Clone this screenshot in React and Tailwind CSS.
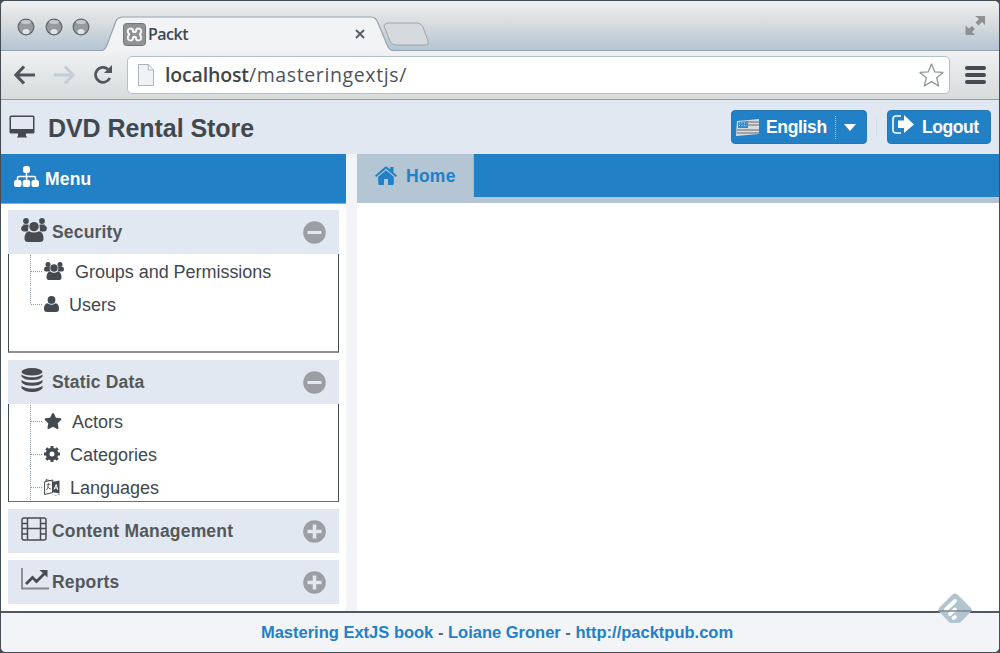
import React from "react";
import { FaStar } from "react-icons/fa";

const UsersIcon = ({ className }) => (
  <svg className={className} viewBox="0 0 20 18" fill="currentColor">
    <circle cx="4" cy="2.600" r="2.500" />
    <circle cx="16" cy="2.600" r="2.500" />
    <path d="M1.500 4.800H6Q5 7.500 6.500 9.400H1.800Q0 9.400 0 7.800Q0 5 1.500 4.800ZM18.500 4.800H14Q15 7.500 13.500 9.400H18.200Q20 9.400 20 7.800Q20 5 18.500 4.800Z" />
    <circle cx="10" cy="6" r="3.700" />
    <path d="M6.200 9.500Q8 10.700 10 10.700T13.800 9.500Q17.500 10 17.500 15.200Q17.500 18 14.700 18H5.300Q2.500 18 2.500 15.200Q2.500 10 6.200 9.500Z" />
  </svg>
);

const UserIcon = ({ className }) => (
  <svg className={className} viewBox="0 0 15 16" fill="currentColor">
    <circle cx="7.500" cy="3.900" r="3.900" />
    <path d="M3.400 7.300Q5 8.700 7.500 8.700Q10 8.700 11.600 7.300Q15 8 15 12.800Q15 16 12 16H3Q0 16 0 12.800Q0 8 3.400 7.300Z" />
  </svg>
);

const CrowdIcon = ({ className }) => (
  <svg className={className} viewBox="0 0 26 24" fill="currentColor">
    <circle cx="5" cy="3" r="2.900" />
    <circle cx="21" cy="3" r="2.900" />
    <circle cx="3.200" cy="10.500" r="3" />
    <circle cx="22.800" cy="10.500" r="3" />
    <path d="M2 6.500H7.500L7 13.300L4 13.500ZM24 6.500H18.500L19 13.300L22 13.500Z" />
    <circle cx="13" cy="8.600" r="4.700" />
    <path d="M8 13.200Q10 14.600 13 14.600Q16 14.600 18 13.200Q22.500 14 22.500 20.500Q22.500 24 19 24H7Q3.500 24 3.500 20.500Q3.500 14 8 13.200Z" />
  </svg>
);

const DatabaseIcon = ({ className }) => (
  <svg className={className} viewBox="0 0 22 24" fill="currentColor">
    <ellipse cx="11" cy="3.800" rx="10.500" ry="3.700" />
    <path d="M.5 6.400Q4 9.200 11 9.200T21.500 6.400V8.500Q19 12 11 12T.5 8.500ZM.5 12Q4 14.800 11 14.800T21.500 12V14.300Q19 17.800 11 17.800T.5 14.300ZM.5 17.700Q4 20.500 11 20.500T21.500 17.700V20.300Q19 24 11 24T.5 20.300Z" />
  </svg>
);

const GearIcon = ({ className }) => (
  <svg className={className} viewBox="0 0 16 16" fill="none" stroke="currentColor">
    <circle cx="8" cy="8" r="4.400" strokeWidth="3.800" />
    <path d="M8 0V3M8 13V16M0 8H3M13 8H16M2.300 2.300L4.500 4.500M11.500 11.500L13.700 13.700M2.300 13.700L4.500 11.500M11.500 4.500L13.700 2.300" strokeWidth="3" />
  </svg>
);

const HomeIcon = ({ className }) => (
  <svg className={className} viewBox="0 0 22 19" fill="currentColor">
    <path d="M0 9.500L9.800 1Q11 0 12.200 1L15.200 3.600V1H18.500V6.500L22 9.500L20.800 10.900L11 2.800L1.200 10.900Z" />
    <path d="M11 4.200L18.800 10.800V17.500Q18.800 19 17.500 19H13V13H9V19H4.500Q3.200 19 3.200 17.500V10.800Z" />
  </svg>
);

const LanguageIcon = ({ className }) => (
  <svg className={className} viewBox="0 0 16 17">
    <path d="M.6 2.800L8.800 1V13.500L.6 15.500ZM2 2V.7L8 2" fill="none" stroke="currentColor" strokeWidth="1" />
    <path d="M2.500 6L6.500 5M4.300 4V6Q4.300 9.500 2.400 11M3.500 7.500Q5 10 7 10" fill="none" stroke="currentColor" strokeWidth=".8" />
    <path d="M8 3L15.500 1.500V14.500L8 13ZM8 15.500L12 16.500L15.500 15V16H9Z" fill="currentColor" />
    <path d="M10 10.500L12.200 5.500L13.800 10.800M10.800 9H13.300" fill="none" stroke="white" strokeWidth="1" />
  </svg>
);

const FilmIcon = ({ className }) => (
  <svg className={className} viewBox="0 0 26 24" fill="none" stroke="currentColor" strokeWidth="1.500">
    <rect x="1" y="1" width="24" height="22" rx="2" />
    <path d="M6.500 1V23M19.500 1V23M6.500 11.500H19.500M1 6.500H6.500M1 11.500H6.500M1 17H6.500M19.500 6.500H25M19.500 11.500H25M19.500 17H25" />
  </svg>
);

const ChartIcon = ({ className }) => (
  <svg className={className} viewBox="0 0 28 22" fill="none" stroke="currentColor">
    <path d="M1 0V20.500H28" strokeWidth="1.800" stroke="#85878a" />
    <path d="M5 16L11.500 9.500L15.500 13.500L24 5" strokeWidth="2.800" />
    <path d="M18.500 2H26.500V9.500Z" fill="currentColor" stroke="none" />
  </svg>
);

const Toggle = ({ open }) => (
  <svg className="mr-[13px] h-[23px] w-[23px] shrink-0" viewBox="0 0 23 23">
    <circle cx="11.500" cy="11.500" r="11.300" fill="#9b9fa3" />
    {open ? (
      <path d="M4.500 11.500H18.500" stroke="#e1e8f1" strokeWidth="3" />
    ) : (
      <path d="M4.500 11.500H18.500M11.500 4.500V18.500" stroke="#e1e8f1" strokeWidth="3.600" />
    )}
  </svg>
);

const SectionHeader = ({ icon, title, open }) => (
  <div className="flex h-11 w-[331px] shrink-0 items-center bg-[#e1e8f1]">
    <div className="ml-[13px] flex h-full w-[31px] items-start pt-[8px] text-[#474c50]">{icon}</div>
    <span className="flex-1 text-[17.500px] leading-5 font-bold tracking-[0.180px] whitespace-nowrap text-[#54585b]">{title}</span>
    <Toggle open={open} />
  </div>
);

const TreeRow = ({ icon, label, last, gap }) => (
  <div className="flex h-[33.200px] items-center">
    <svg className="ml-[20px] h-full w-[15px] shrink-0" viewBox="0 0 15 33" fill="none" stroke="#8194a4" strokeDasharray="1 1">
      <path d={last ? "M1.500 -1V17" : "M1.500 -1V33"} />
      <path d="M2 17.500H14" />
    </svg>
    <div className="flex items-center pt-px text-[#434a50]">{icon}</div>
    <span className={"pt-[2px] text-[18px] leading-5 whitespace-nowrap text-[#42484d] " + gap}>{label}</span>
  </div>
);

function Chrome() {
  return (
    <header className="h-[99px] border-b border-[#999] bg-[#dfe2e3]">
      <div className="relative flex h-[50px] items-start bg-linear-to-b from-[#eff0f2] via-[#d8dcde] via-45% to-[#b2c4d3]">
        <svg className="absolute top-[14px] left-0 h-9 w-[998px]" viewBox="0 0 998 36">
          <path d="M101 36Q104 35 106 30L115 6Q117 2 122 2H370Q375 2 377 8L387 32Q389 36 393 36Z" fill="#f1f3f5" />
          <path d="M0 35.500H101Q104 35 106 30L115 6Q117 2 122 2H370Q375 2 377 8L387 32Q389 35.500 393 35.500H998" fill="none" stroke="#96a3ad" strokeWidth="1.200" />
          <path d="M383 11Q384 8 387 8H416Q420 8 422 12L427 26Q428 30 424 30H395Q391 30 389 26Z" fill="#d4dadd" stroke="#a3a6a8" />
        </svg>
        <div className="mt-[17px] ml-4 flex gap-[9.500px]">
          {[0, 1, 2].map((n) => (
            <svg key={n} className="h-[18px] w-[18px]" viewBox="0 0 18 18">
              <circle cx="9" cy="9" r="7.800" fill="#999a9b" stroke="#666a6e" strokeWidth="1.300" />
              <ellipse cx="9" cy="4" rx="5" ry="2" fill="#c5c8ca" />
              <ellipse cx="9" cy="13.500" rx="3.500" ry="2.600" fill="#e1e6e9" />
            </svg>
          ))}
        </div>
        <svg className="relative mt-[22px] ml-[33px] h-[23px] w-[23px]" viewBox="0 0 23 23">
          <rect x=".5" y=".5" width="22" height="22" rx="3" fill="#919293" stroke="#737678" />
          <path d="M8 5.500Q10.500 6 10 8.500Q11.500 10 13 8.500Q12.500 6 15 5.500Q19 5.500 18 9.500Q16 11.500 18 13.500Q19 17.500 15 17.500Q12.500 17 13 14.500Q11.500 13 10 14.500Q10.500 17 8 17.500Q4 17.500 5 13.500Q7 11.500 5 9.500Q4 5.500 8 5.500Z" fill="none" stroke="#f5f6f7" strokeWidth="2" />
        </svg>
        <span className="relative mt-[22px] ml-[2px] w-[207px] font-['Open_Sans',sans-serif] text-[16px] leading-[22px] font-semibold tracking-[-0.500px] text-[#42484e]">Packt</span>
        <svg className="relative mt-[28px] h-[10px] w-[10px]" viewBox="0 0 10 10">
          <path d="M1 1L9 9M9 1L1 9" stroke="#555b60" strokeWidth="1.800" />
        </svg>
        <svg className="mt-[14px] mr-[13px] ml-auto h-[21px] w-[21px] text-[#8f9191]" viewBox="0 0 21 21" fill="currentColor">
          <path d="M10 1H20V10L17 7L13.500 10.500L10.500 7.500L14 4ZM.5 10.500L4 13.500L7 11L10 14L7 17L10 20H.5Z" />
        </svg>
      </div>
      <div className="flex h-12 items-center bg-linear-to-b from-[#eff1f2] to-[#d8dbdc]">
        <svg className="ml-[13px] h-[20px] w-[22px]" viewBox="0 0 22 20">
          <path d="M10 1.500L2 10L10 18.500M2 10H21" fill="none" stroke="#50565b" strokeWidth="3.200" />
        </svg>
        <svg className="ml-[17px] h-[20px] w-[22px]" viewBox="0 0 22 20">
          <path d="M12 1.500L20 10L12 18.500M20 10H1" fill="none" stroke="#c2cdd5" strokeWidth="3" />
        </svg>
        <svg className="ml-[18px] h-[20px] w-[20px]" viewBox="0 0 20 20">
          <path d="M15 4.200A7.500 7.500 0 1 0 16.800 13" fill="none" stroke="#50565b" strokeWidth="2.800" />
          <path d="M19 0V8H11Z" fill="#50565b" />
        </svg>
        <div className="ml-[14px] flex h-[38px] w-[823px] items-center rounded-[5px] border border-[#b3c1cd] bg-white">
          <svg className="ml-[10px] h-[22px] w-[16px]" viewBox="0 0 17 22" preserveAspectRatio="none">
            <path d="M.5 .5H11L16.500 6V21.500H.5ZM11 .5V6H16.500" fill="#f0f3f6" stroke="#a7b2bb" />
          </svg>
          <span className="ml-[11px] flex-1 font-['Open_Sans',sans-serif] text-[19.500px] leading-6 text-[#4c545a]">
            <span className="font-semibold tracking-[-0.150px] text-[#3f464b]">localhost</span>
            <span className="tracking-[0.620px]">/masteringextjs/</span>
          </span>
          <svg className="mr-[5px] h-[25px] w-[25px]" viewBox="0 0 25 25">
            <path d="M12.500 1L15.700 8.800L24 9.400L17.700 14.800L19.700 23L12.500 18.600L5.300 23L7.300 14.800L1 9.400L9.300 8.800Z" fill="none" stroke="#8b969e" strokeWidth="1.300" strokeLinejoin="round" />
          </svg>
        </div>
        <div className="ml-[15px] flex flex-col gap-[3px]">
          <div className="h-1 w-[21px] rounded-sm bg-[#454b51]" />
          <div className="h-1 w-[21px] rounded-sm bg-[#454b51]" />
          <div className="h-1 w-[21px] rounded-sm bg-[#454b51]" />
        </div>
      </div>
    </header>
  );
}

function TopBar() {
  return (
    <div className="flex h-[54px] shrink-0 items-start bg-[#e1e8f2]">
      <svg className="mt-[15px] ml-2 h-[23px] w-[26px]" viewBox="0 0 26 23">
        <path d="M2 .5H24Q25.500 .5 25.500 2V17Q25.500 18.500 24 18.500H17V21.500H18V22.500H8V21.500H9V18.500H2Q.5 18.500 .5 17V2Q.5 .5 2 .5ZM2 2V14H24V2Z" fill="#43494e" fillRule="evenodd" />
      </svg>
      <h1 className="mt-[13px] ml-[13px] text-[25px] leading-[30px] font-bold tracking-[-0.060px] whitespace-nowrap text-[#42484d]">DVD Rental Store</h1>
      <button className="mt-[10px] ml-auto flex h-[34px] w-[136px] items-center rounded-[4px] border border-[#2877b0] bg-[#2180c6] text-white">
        <svg className="ml-[4px] h-[17px] w-[24px]" viewBox="0 0 24 17">
          <path d="M1 2L13 1L23 0V15L12 16L0 17Z" fill="#d9dcde" />
          <path d="M12 3H23M12 6H23M1 11H23M1 14H23" stroke="#8d9092" strokeWidth="1.500" />
          <path d="M2 3L12 2V9H2Z" fill="#3b89c4" />
          <path d="M3 4H11M3 6.500H11" stroke="#d8e5ee" strokeDasharray="1 1.500" />
        </svg>
        <span className="ml-[6px] text-[17.500px] leading-5 font-bold tracking-[-0.350px]">English</span>
        <span className="ml-[8px] h-[23px] border-l border-dotted border-[#b3cddf]" />
        <svg className="ml-[8px] h-[9px] w-[12px]" viewBox="0 0 12 9"><path d="M0 1H12L6 8Z" fill="white" /></svg>
      </button>
      <span className="mt-[18px] ml-[9px] h-[18px] border-l border-[#d5dfe9]" />
      <button className="mt-[10px] mr-2 ml-[10px] flex h-[34px] w-[104px] items-center rounded-[4px] border border-[#2877b0] bg-[#2180c6] text-white">
        <svg className="mb-[6px] ml-[4px] h-[19px] w-[22px]" viewBox="0 0 22 19">
          <path d="M9 1H4Q1 1 1 4V15Q1 18 4 18H9" fill="none" stroke="white" strokeWidth="1.600" />
          <path d="M6 5.500H12V0L22 9.500L12 18V13H6Z" fill="white" />
        </svg>
        <span className="ml-[8px] text-[17.500px] leading-5 font-bold tracking-[-0.450px]">Logout</span>
      </button>
    </div>
  );
}

function Sidebar() {
  return (
    <nav className="flex w-[345px] shrink-0 flex-col overflow-hidden bg-white">
      <div className="mb-[6px] flex h-[50px] shrink-0 items-center border-b border-[#9aabb8] bg-[#2180c6] text-white">
        <svg className="mb-[4px] ml-[13px] h-[21px] w-[25px]" viewBox="0 0 25 21" fill="currentColor">
          <rect x="9" y="0" width="7" height="7" rx="2.500" />
          <rect x="0" y="14" width="7.500" height="7" rx="2" />
          <rect x="8.700" y="14" width="7.500" height="7" rx="2" />
          <rect x="17.500" y="14" width="7.500" height="7" rx="2" />
          <path d="M12.500 6V15M3.500 15V12Q3.500 10.500 5 10.500H20Q21.500 10.500 21.500 12V15" fill="none" stroke="currentColor" strokeWidth="1.600" />
        </svg>
        <span className="ml-[6px] text-[17.500px] leading-5 font-bold tracking-[0.200px]">Menu</span>
      </div>
      <div className="flex flex-col pl-[7px]">
        <SectionHeader title="Security" open icon={<CrowdIcon className="h-6 w-[26px]" />} />
        <div className="mb-[7px] h-[99px] w-[331px] overflow-hidden border-x border-b-2 border-x-[#434b52] border-b-[#8f9194]">
          <TreeRow icon={<UsersIcon className="h-[18px] w-5" />} label="Groups and Permissions" gap="ml-[11px] tracking-[-0.040px]" />
          <TreeRow last icon={<UserIcon className="h-4 w-[15px]" />} label="Users" gap="ml-[10px]" />
        </div>
        <SectionHeader title="Static Data" open icon={<DatabaseIcon className="h-6 w-[22px]" />} />
        <div className="mb-[7px] h-[98px] w-[331px] overflow-hidden border-x border-b border-x-[#434b52] border-b-[#3f79a5]">
          <TreeRow icon={<FaStar className="h-[18px] w-[18px]" />} label="Actors" gap="ml-[10px]" />
          <TreeRow icon={<GearIcon className="h-4 w-4" />} label="Categories" gap="ml-[10px]" />
          <TreeRow icon={<LanguageIcon className="h-[17px] w-4" />} label="Languages" gap="ml-[10px]" />
        </div>
        <SectionHeader title="Content Management" icon={<FilmIcon className="h-6 w-[26px]" />} />
        <div className="h-[7px]" />
        <SectionHeader title="Reports" icon={<ChartIcon className="h-[22px] w-7" />} />
      </div>
    </nav>
  );
}

export default function App() {
  return (
    <div className="h-[653px] w-[1000px] overflow-hidden bg-[#434b53] font-['Liberation_Sans',Arial,sans-serif]">
      <div className="relative flex h-[653px] w-[1000px] flex-col overflow-hidden rounded-[6px] border border-[#434b53] bg-white">
        <Chrome />
        <TopBar />
        <div className="flex h-[457px] shrink-0">
          <Sidebar />
          <div className="w-[11px] shrink-0 bg-[#f3f4f7]" />
          <main className="flex-1 bg-white">
            <div className="flex h-[49px] border-b-[6px] border-[#b4c5d3] bg-[#2180c6]">
              <div className="flex w-[117px] items-center border-r border-[#9fb9cc] bg-[#b4c5d3] text-[#2180c6]">
                <HomeIcon className="ml-[18px] h-[19px] w-[22px]" />
                <span className="ml-[9px] text-[17.500px] leading-5 font-bold tracking-[0.250px]">Home</span>
              </div>
            </div>
          </main>
        </div>
        <footer className="flex flex-1 items-center justify-center border-t-2 border-[#4c5962] bg-[#f3f4f7] pr-[6px] pb-[2px]">
          <span className="text-[16.500px] leading-5 font-bold whitespace-nowrap text-[#2180c6]">
            Mastering ExtJS book <span className="text-[#4f6f87]">-</span> Loiane Groner <span className="text-[#4f6f87]">-</span> http://packtpub.com
          </span>
        </footer>
        <svg className="absolute top-[592px] left-[937px] h-[31px] w-[34px]" viewBox="0 0 34 31">
          <path d="M14.500 1.500Q17 -.5 19.500 1.500L32.500 14.500Q34.500 17 32.500 19L23 29Q22 30 20 30H14Q12 30 11 29L1.500 19Q-.5 17 1.500 14.500Z" fill="#b2c4d0" />
          <path d="M8 16.500L17 8M12 21L17 16.500M15.500 25L17 24" stroke="white" strokeWidth="3.800" strokeLinecap="round" />
          <path d="M0 18H34" stroke="#7e8990" strokeWidth="1.500" />
        </svg>
      </div>
    </div>
  );
}
